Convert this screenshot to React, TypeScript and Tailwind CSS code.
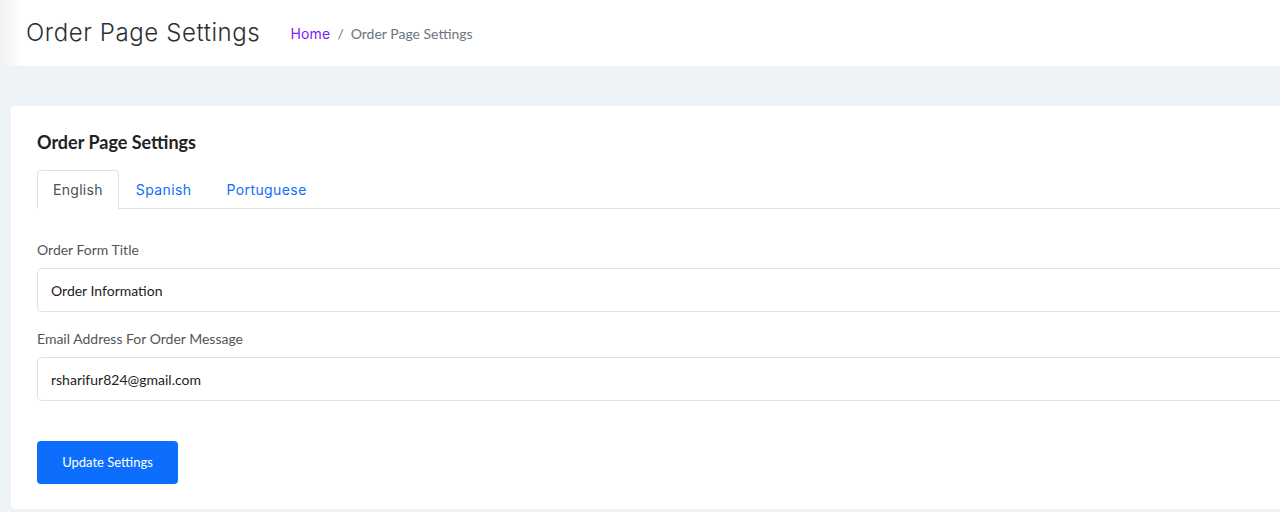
import React from "react";

export default function App() {
  return (
    <div className="w-[1280px] h-[512px] overflow-hidden bg-[#eef3f7]" style={{ fontFamily: "Lato, 'Liberation Sans', sans-serif" }}>
      <div className="w-[1500px]">
        <header className="h-[66px] flex items-center pl-[26px] bg-[linear-gradient(to_right,#eff1f3,#ffffff_22px)]">
          <h1 className="text-[24px] font-light text-[#2b2f33] tracking-[0.6px]" style={{ fontFamily: "Inter, 'Open Sans', sans-serif" }}>
            Order Page Settings
          </h1>
          <nav className="ml-[30px] flex items-center text-[14px] pt-[1px]">
            <span className="text-[#7a1df5] tracking-[0.2px]" style={{ fontFamily: "Inter, 'Open Sans', sans-serif" }}>Home</span>
            <span className="mx-[7px] text-[#6c757d]">/</span>
            <span className="text-[#6c757d]">Order Page Settings</span>
          </nav>
        </header>
        <div className="pt-[40px] pl-[11px]">
          <div className="bg-white rounded-[4px] pl-[26px] pr-[26px] pt-[24px] h-[403px]">
            <h2 className="text-[18px] font-bold text-[#222] leading-[24px]">Order Page Settings</h2>
            <div className="mt-[16px] flex border-b border-[#dee2e6] h-[39px]" style={{ fontFamily: "Inter, 'Open Sans', sans-serif" }}>
              <div className="h-[39px] px-[15px] flex items-center border border-[#dee2e6] border-b-white rounded-t-[4px] bg-white text-[14px] text-[#495057] tracking-[0.3px] -mb-px">
                English
              </div>
              <div className="h-[39px] pl-[17px] pr-[17px] flex items-center text-[14px] text-[#0d6efd] tracking-[0.4px]">Spanish</div>
              <div className="h-[39px] pl-[18px] pr-[16px] flex items-center text-[14px] text-[#0d6efd] tracking-[0.4px]">Portuguese</div>
            </div>
            <div className="mt-[31px]">
              <label className="block text-[14px] text-[#555] leading-[20px]">Order Form Title</label>
              <div className="mt-[8px] h-[44px] border border-[#dee2e6] rounded-[4px] flex items-center pl-[13px] text-[14px] text-[#222]">
                Order Information
              </div>
            </div>
            <div className="mt-[17px]">
              <label className="block text-[14px] text-[#555] leading-[20px]">Email Address For Order Message</label>
              <div className="mt-[8px] h-[44px] border border-[#dee2e6] rounded-[4px] flex items-center pl-[13px] text-[14px] text-[#222]">
                rsharifur824@gmail.com
              </div>
            </div>
            <button className="mt-[40px] w-[141px] h-[43px] bg-[#0d6efd] rounded-[4px] text-white text-[13px]">
              Update Settings
            </button>
          </div>
        </div>
      </div>
    </div>
  );
}
